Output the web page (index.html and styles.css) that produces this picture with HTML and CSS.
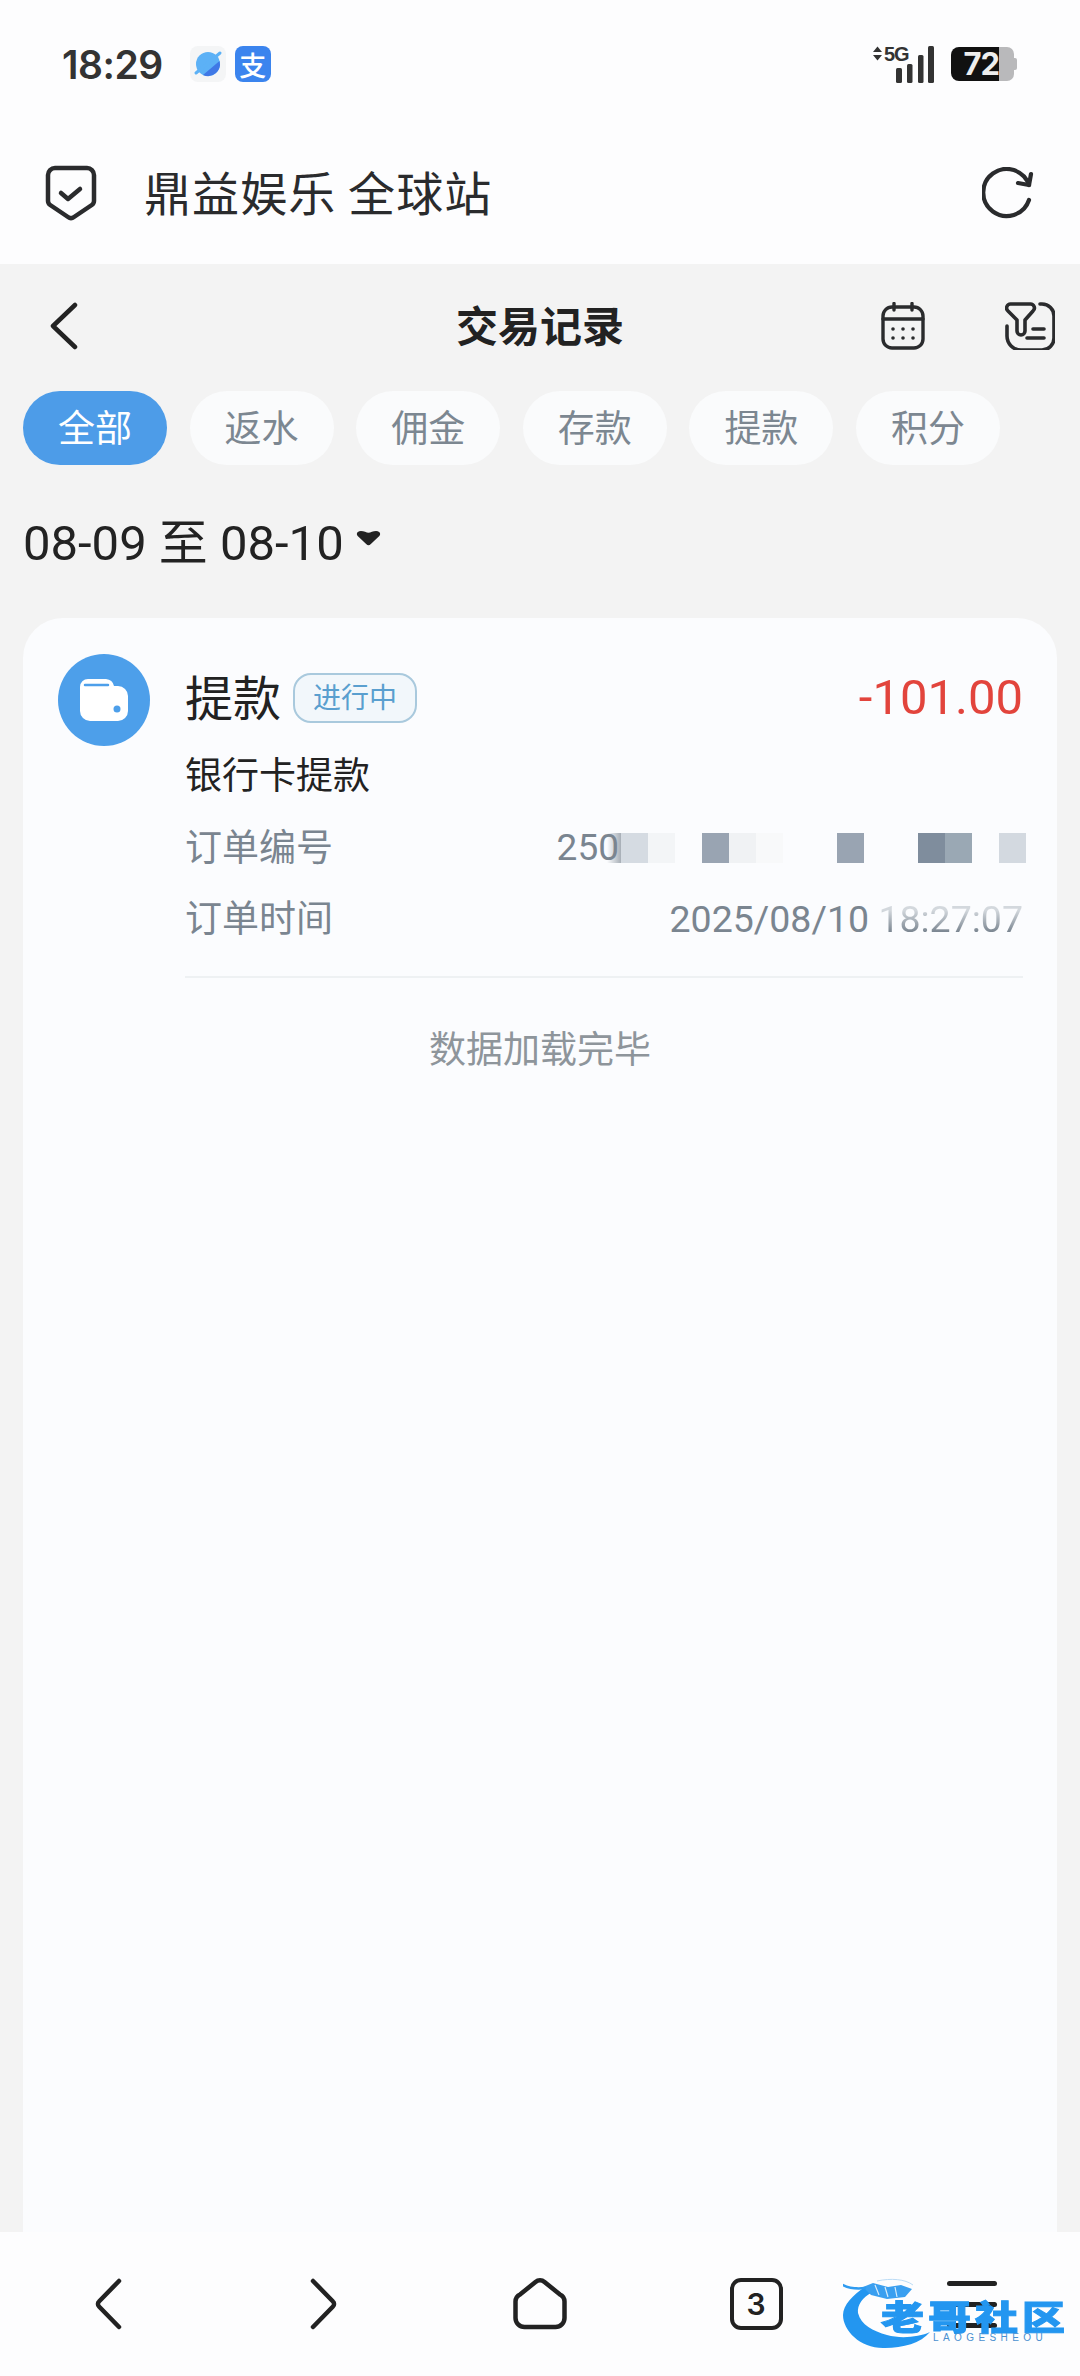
FILE: index.html
```html
<!DOCTYPE html>
<html lang="zh-CN">
<head>
  <meta charset="UTF-8">
  <title>交易记录</title>
  <meta name="viewport" content="width=device-width, initial-scale=1.0">
  <link rel="stylesheet" href="styles.css">
</head>
<body>
  <div class="status-bar">
    <span class="time">18:29</span>
    <svg class="app-icon planet" viewBox="0 0 36 36">
      <rect x="0" y="0" width="36" height="36" rx="8" fill="#f4f5f6"/>
      <circle cx="18" cy="18" r="12" fill="#5cb1f6"/>
      <path d="M29.500 15 A12 12 0 0 1 13 29 Z" fill="#3f78e6"/>
      <path d="M6 27 L30 7" stroke="#5cb1f6" stroke-width="3" stroke-linecap="round"/>
    </svg>
    <span class="alipay">支</span>
    <div class="status-right">
      <svg class="signal" viewBox="0 0 62 38">
        <path d="M1 7 L5.500 1.500 L10 7 Z M1 10 L10 10 L5.500 15.500 Z" fill="#333"/>
        <rect x="24" y="23" width="6" height="15" rx="1.500" fill="#333"/>
        <rect x="35" y="19" width="5.500" height="19" rx="1.500" fill="#333"/>
        <rect x="46" y="10" width="5.500" height="28" rx="1.500" fill="#333"/>
        <rect x="56" y="1" width="6" height="37" rx="1.500" fill="#333"/>
      </svg>
      <span class="five-g">5G</span>
      <div class="battery">
        <span class="battery-fill">72</span>
        <span class="battery-rest"></span>
        <span class="battery-nub"></span>
      </div>
    </div>
  </div>

  <div class="toolbar">
    <svg class="shield" viewBox="0 0 52 56" fill="none" stroke="#2a2b2d" stroke-width="4.500" stroke-linecap="round" stroke-linejoin="round">
      <path d="M10 3H42a7 7 0 0 1 7 7V36a5 5 0 0 1-2.200 4L29 52a5 5 0 0 1-6 0L5.200 40A5 5 0 0 1 3 36V10a7 7 0 0 1 7-7Z"/>
      <path d="M16 28l7 6 12-10"/>
    </svg>
    <span class="site-name">鼎益娱乐 全球站</span>
    <svg class="refresh" viewBox="0 0 52 52" fill="none" stroke="#2a2b2d" stroke-width="4.200" stroke-linecap="round" stroke-linejoin="round">
      <path d="M47 33A23.500 23.500 0 1 1 47 18"/>
      <path d="M49 7L47 18L36 16"/>
    </svg>
  </div>

  <div class="main">
    <div class="nav-row">
      <svg class="back" viewBox="0 0 28 48" fill="none" stroke="#222" stroke-width="4.500" stroke-linecap="round" stroke-linejoin="round">
        <path d="M25 3L3 24L25 45"/>
      </svg>
      <h1 class="page-title">交易记录</h1>
      <div class="nav-actions">
        <svg class="calendar" viewBox="0 0 44 48" fill="none" stroke="#2a2b2d" stroke-width="3.400" stroke-linecap="round">
          <rect x="2" y="5" width="40" height="41" rx="9"/>
          <path d="M2 17H42M13 1.500V8M31 1.500V8"/>
          <g fill="#2a2b2d" stroke="none">
            <circle cx="12" cy="27" r="1.800"/><circle cx="22" cy="27" r="1.800"/><circle cx="32" cy="27" r="1.800"/>
            <circle cx="12" cy="36" r="1.800"/><circle cx="22" cy="36" r="1.800"/><circle cx="32" cy="36" r="1.800"/>
          </g>
        </svg>
        <svg class="filter" viewBox="0 0 50 48" fill="none" stroke="#2a2b2d" stroke-width="3.600" stroke-linecap="round" stroke-linejoin="round">
          <path d="M6 2H25a4 4 0 0 1 3 7l-8 9v11a4 4 0 0 1-8 0V18L3 9a4 4 0 0 1 3-7Z"/>
          <path d="M35 2h2a12 12 0 0 1 12 12v22a12 12 0 0 1-12 12H16A14 14 0 0 1 2 34V24"/>
          <path d="M28 27h11M22 36h17"/>
        </svg>
      </div>
    </div>

    <div class="tabs">
      <span class="tab active">全部</span>
      <span class="tab">返水</span>
      <span class="tab">佣金</span>
      <span class="tab">存款</span>
      <span class="tab">提款</span>
      <span class="tab">积分</span>
    </div>

    <div class="date-range">
      <span>08-09 至 08-10</span>
      <svg class="caret" viewBox="0 0 26 17"><path d="M5 1C8 1 11 2.500 13 3C15 2.500 18 1 21 1C25 1 26.500 4 24.500 6.500L15.500 15A3.500 3.500 0 0 1 10.500 15L1.500 6.500C-0.500 4 1 1 5 1Z" fill="#222"/></svg>
    </div>

    <div class="card">
      <div class="record">
        <svg class="record-icon" viewBox="0 0 92 92">
          <circle cx="46" cy="46" r="46" fill="#4d9fea"/>
          <path d="M30 25H48a9 9 0 0 1 8 7H60a10 10 0 0 1 10 10V57a10 10 0 0 1-10 10H32a10 10 0 0 1-10-10V33a8 8 0 0 1 8-8Z" fill="#fff"/>
          <path d="M27 31H50" stroke="#4d9fea" stroke-width="2.500" stroke-linecap="round"/>
          <circle cx="59" cy="55" r="3.500" fill="#4d9fea"/>
        </svg>
        <div class="record-body">
          <div class="record-head">
            <span class="record-type">提款</span>
            <span class="status-tag">进行中</span>
            <span class="amount">-101.00</span>
          </div>
          <div class="record-method">银行卡提款</div>
          <div class="info-row">
            <span class="info-label">订单编号</span>
            <div class="order-no">
              <span>250</span>
              <div class="mosaic">
                <i class="m-d5"></i><i class="m-f3"></i><i></i>
                <i class="m-99"></i><i class="m-f0"></i><i class="m-f8"></i><i></i><i></i>
                <i class="m-99"></i><i></i><i></i>
                <i class="m-7f"></i><i class="m-9a"></i><i></i>
                <i class="m-d3"></i>
              </div>
            </div>
          </div>
          <div class="info-row">
            <span class="info-label">订单时间</span>
            <span class="info-value">2025/08/10 <span class="faded">18:27:07</span></span>
          </div>
        </div>
      </div>
      <div class="load-done">数据加载完毕</div>
    </div>
  </div>

  <div class="bottom-bar">
    <svg class="bar-icon" viewBox="0 0 28 52" fill="none" stroke="#222" stroke-width="4.500" stroke-linecap="round" stroke-linejoin="round">
      <path d="M25 3L5 23.500a3.500 3.500 0 0 0 0 5L25 49"/>
    </svg>
    <svg class="bar-icon" viewBox="0 0 28 52" fill="none" stroke="#222" stroke-width="4.500" stroke-linecap="round" stroke-linejoin="round">
      <path d="M3 3L23 23.500a3.500 3.500 0 0 1 0 5L3 49"/>
    </svg>
    <svg class="bar-icon home" viewBox="0 0 54 52" fill="none" stroke="#222" stroke-width="4.500" stroke-linejoin="round">
      <path d="M22.500 4a7 7 0 0 1 9 0L47 16.500a8 8 0 0 1 4.500 7V40a9 9 0 0 1-9 9H11.500a9 9 0 0 1-9-9V23.500a8 8 0 0 1 4.500-7Z"/>
    </svg>
    <div class="tab-count">3</div>
    <div class="menu-lines"><i></i><i></i><i></i></div>

    <div class="watermark">
      <svg class="dragon" viewBox="0 0 100 74">
        <path d="M22 12C10 20 0 30 0 40C0 56 18 74 42 73C60 73 78 68 87 57C76 62 58 64 44 60C30 56 18 50 15 38C14 30 20 22 28 18Z" fill="#2396f0"/>
        <path d="M20 12L30 8L45 12L58 10L69 14L62 22L44 24L28 20Z" fill="#3a9ff0"/>
        <path d="M32 10L36 20M42 12L45 22M52 12L54 22" stroke="#d8ecfb" stroke-width="1.200" fill="none"/>
        <path d="M0 10C8 14 14 14 22 13" stroke="#2f9bf0" stroke-width="2.500" stroke-linecap="round" fill="none"/>
        <path d="M34 6C48 3 62 4 70 10" stroke="#bcdcf6" stroke-width="1" fill="none"/>
      </svg>
      <span class="wm-cn">老哥社区</span>
      <span class="wm-en">LAOGESHEOU</span>
    </div>
  </div>
</body>
</html>
```

FILE: styles.css
```css
* { box-sizing: border-box; }
html, body { margin: 0; padding: 0; }
body {
  width: 1080px; height: 2376px; overflow: hidden;
  display: flex; flex-direction: column;
  background: #fdfdfe; color: #222;
  font-family: Roboto, "Noto Sans CJK SC", sans-serif;
}

/* status bar */
.status-bar { height: 128px; display: flex; align-items: center; padding-left: 62px; position: relative; }
.time { font-family: Inter, Roboto, sans-serif; font-weight: 600; font-size: 39px; color: #333; letter-spacing: -0.5px; margin-right: 27px; }
.app-icon { width: 36px; height: 36px; }
.alipay {
  width: 36px; height: 36px; margin-left: 9px; border-radius: 8px; background: #3b84ee; color: #fff;
  display: flex; align-items: center; justify-content: center;
  font-family: "Noto Sans CJK SC", sans-serif; font-size: 27px; font-weight: 500; line-height: 1;
}
.status-right { margin-left: auto; margin-right: 63px; display: flex; align-items: center; position: relative; }
.signal { width: 62px; height: 38px; margin-right: 17px; }
.five-g { position: absolute; left: 12px; top: -2px; font-family: "Liberation Sans", sans-serif; font-weight: 700; font-size: 20px; letter-spacing: -1px; color: #333; }
.battery { display: flex; align-items: center; height: 34px; }
.battery-fill {
  width: 48px; height: 34px; background: #111; color: #eee;
  border-radius: 8px 0 0 8px;
  font-family: Inter, sans-serif; font-weight: 700; font-size: 31px; line-height: 34px; text-align: right;
  letter-spacing: -1px;
}
.battery-rest { width: 15px; height: 34px; background: #b9b9bb; border-radius: 0 7px 7px 0; }
.battery-nub { width: 3px; height: 12px; background: #b9b9bb; border-radius: 0 2px 2px 0; }

/* browser toolbar */
.toolbar { height: 136px; padding: 0 46px 6px 45px; display: flex; align-items: center; }
.shield { width: 52px; height: 56px; flex: none; }
.site-name { margin-left: 47px; padding-bottom: 5px; font-family: "Noto Sans CJK SC", sans-serif; font-size: 47px; letter-spacing: 1.1px; color: #2a2b2d; }
.refresh { width: 52px; height: 52px; margin-left: auto; }

/* page */
.main { flex: 1; min-height: 0; background: #f3f3f3; display: flex; flex-direction: column; }
.nav-row { height: 124px; display: grid; grid-template-columns: 1fr auto 1fr; align-items: center; padding: 0 25px; }
.back { width: 28px; height: 48px; margin-left: 25px; }
.page-title { margin: 0; padding-bottom: 5px; font-family: "Noto Sans CJK SC", sans-serif; font-size: 42px; font-weight: 700; color: #222; }
.nav-actions { justify-self: end; display: flex; align-items: center; gap: 80px; }
.calendar { width: 44px; height: 48px; }
.filter { width: 50px; height: 48px; }

.tabs { margin-top: 3px; padding-left: 23px; display: flex; gap: 22.600px; }
.tab {
  width: 144px; height: 74px; padding-bottom: 4px; border-radius: 37px; background: #fafbfc; color: #7c8791;
  display: flex; align-items: center; justify-content: center;
  font-family: "Noto Sans CJK SC", sans-serif; font-size: 37px;
}
.tab.active { background: #4d9ce8; color: #fff; }

.date-range { height: 80px; margin-top: 36px; padding: 0 0 6px 23px; display: flex; align-items: center; font-size: 49px; color: #222; font-family: Roboto, "Noto Sans CJK SC", sans-serif; }
.caret { width: 25px; height: 16px; margin-left: 12px; margin-top: -1px; }

.card { flex: 1; margin: 37px 23px 0; background: #fbfcfe; border-radius: 40px 40px 0 0; padding: 36px 34px 0 35px; }
.record { display: flex; gap: 35px; }
.record-icon { width: 92px; height: 92px; flex: none; }
.record-body { flex: 1; min-width: 0; padding-bottom: 22px; border-bottom: 2px solid #eef1f3; }
.record-head { height: 87px; display: flex; align-items: center; }
.record-type { padding-bottom: 6px; font-family: "Noto Sans CJK SC", sans-serif; font-size: 48px; color: #222; }
.status-tag {
  margin-left: 12px; width: 124px; height: 50px; padding-bottom: 3px; border-radius: 18px;
  border: 2px solid #a9c9dd; background: #f2f7fb; color: #5a9fcf;
  display: flex; align-items: center; justify-content: center;
  font-family: "Noto Sans CJK SC", sans-serif; font-size: 28px;
}
.amount { margin-left: auto; font-size: 49px; color: #e2443c; }
.record-method { height: 71px; line-height: 65px; font-family: "Noto Sans CJK SC", sans-serif; font-size: 37px; color: #222; }
.info-row { height: 71px; display: flex; align-items: center; justify-content: space-between; color: #7a8590; }
.info-label { padding-bottom: 5px; font-family: "Noto Sans CJK SC", sans-serif; font-size: 37px; }
.info-value { font-size: 37.500px; }
/* the screenshot's mosaic bleeds into the time, its upper half looks washed out */
.faded { background: linear-gradient(180deg, #d3d8dd 30%, #7a8590 80%); -webkit-background-clip: text; background-clip: text; color: transparent; }
.order-no { display: flex; align-items: center; font-size: 37px; margin-right: -3px; }
.mosaic { display: flex; margin-left: 2px; position: relative; }
.mosaic::before { content: ""; position: absolute; left: -14px; top: 0; width: 14px; height: 100%; background: linear-gradient(90deg, rgba(122,133,144,0), rgba(122,133,144,0.65)); }
.mosaic i { display: block; width: 27px; height: 30px; }
.m-d5 { background: #d5dbe2; }
.m-f3 { background: #f3f5f7; }
.m-99 { background: #99a4b2; }
.m-f0 { background: #f0f2f4; }
.m-f8 { background: #f8f9fa; }
.m-7f { background: #7f8d9d; }
.m-9a { background: #9aa8b4; }
.m-d3 { background: #d3d9e0; }

.load-done { margin: 39px -34px 0 -35px; text-align: center; line-height: 60px; font-family: "Noto Sans CJK SC", sans-serif; font-size: 37px; color: #8e959b; }

/* browser bottom bar */
.bottom-bar { height: 144px; flex: none; display: grid; grid-template-columns: repeat(5, 216px); justify-items: center; align-items: center; background: #fdfdfe; position: relative; }
.bar-icon { width: 28px; height: 52px; }
.bar-icon.home { width: 54px; }
.tab-count {
  width: 53px; height: 52px; border: 4.500px solid #222; border-radius: 11px;
  display: flex; align-items: center; justify-content: center;
  font-family: Inter, sans-serif; font-size: 30px; font-weight: 600; color: #222;
}
.menu-lines { width: 50px; height: 47px; display: flex; flex-direction: column; justify-content: space-between; }
.menu-lines i { display: block; height: 5px; border-radius: 3px; background: #222; }

/* watermark sits over the menu button */
.watermark { position: absolute; left: 843px; top: 43px; width: 220px; height: 74px; }
.dragon { position: absolute; left: 0; top: 0; width: 100px; height: 74px; }
.wm-cn {
  position: absolute; left: 38px; top: 23px;
  font-family: "Noto Sans CJK SC", sans-serif; font-weight: 900; font-size: 43px; line-height: 34px; letter-spacing: 4px; white-space: nowrap;
  color: #2396f0; -webkit-text-stroke: 1.200px #2396f0;
  transform: scaleY(0.8);
}
.wm-en { position: absolute; left: 90px; top: 58px; font-family: "Liberation Sans", sans-serif; font-size: 10px; line-height: 10px; letter-spacing: 4.400px; color: #4a90d0; white-space: nowrap; }
```
